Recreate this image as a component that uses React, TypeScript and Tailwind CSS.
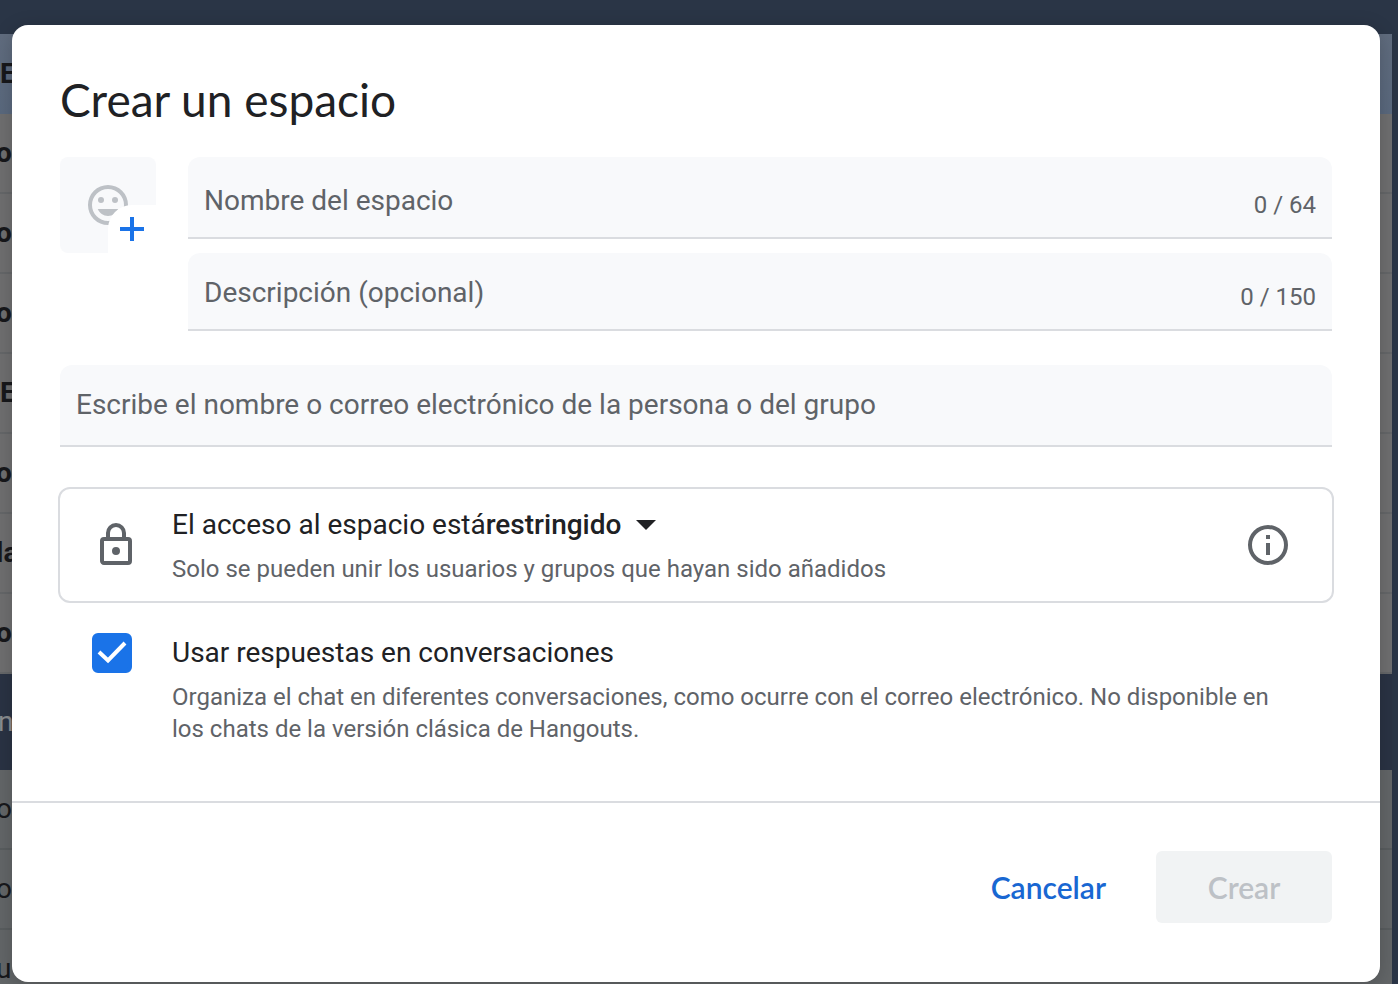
import type { ReactNode } from 'react'

const rows = ['o', 'o', 'o', 'E', 'o', 'la', 'o']
const lowerRows = ['o', 'o', 'u']

function Backdrop() {
  return (
    <div className="h-screen overflow-hidden bg-[#2a3546] pt-[34px] pr-1.5 text-[28px] text-[#17181b]" aria-hidden="true">
      <div className="flex h-20 items-center bg-linear-to-b from-[#606c7e] to-[#5a697e] font-bold">E</div>
      {rows.map((text, i) => (
        <div
          key={i}
          className={`flex h-20 items-center border-b-2 border-[#656769] bg-[#6f6f70] font-bold ${text === 'E' ? '' : '-indent-1'}`}
        >
          {text}
        </div>
      ))}
      <div className="flex h-24 items-center bg-[#2a3344] text-[#8b8d90] -indent-0.5">n</div>
      {lowerRows.map((text, i) => (
        <div key={i} className="flex h-20 items-center border-b-2 border-[#595d5f] bg-[#636668] -indent-1">
          {text}
        </div>
      ))}
    </div>
  )
}

function Icon({ children }: { children: ReactNode }) {
  return (
    <svg viewBox="0 0 24 24" className="size-12 shrink-0" fill="currentColor" aria-hidden="true">
      {children}
    </svg>
  )
}

type FieldProps = {
  label: string
  counter?: string
  className: string
}

function Field({ label, counter, className }: FieldProps) {
  return (
    <label className={`flex items-center rounded-t-xl border-b-2 border-[#dadce0] bg-[#f8f9fb] px-4 text-[#5f6368] ${className}`}>
      <input
        type="text"
        placeholder={label}
        aria-label={label}
        className="h-10 min-w-0 flex-1 bg-transparent text-[28px] outline-none placeholder:text-[#5f6368]"
      />
      {counter && <span className="pt-2 text-2xl">{counter}</span>}
    </label>
  )
}

export default function App() {
  return (
    <div className="font-[Roboto,sans-serif]">
      <Backdrop />
      <div
        role="dialog"
        aria-labelledby="dialog-title"
        className="absolute top-[25px] right-[18px] left-3 rounded-2xl bg-white shadow-[0_4px_20px_rgba(0,0,0,0.2)]"
      >
        <div className="px-12 pt-12 pb-14">
          <h1 id="dialog-title" className="font-[Lato,sans-serif] text-[46px] leading-[54px] text-[#202124]">
            Crear un espacio
          </h1>

          <div className="mt-[30px] flex gap-8">
            <button type="button" aria-label="Elegir un emoji" className="relative flex size-24 shrink-0 items-center justify-center rounded-lg bg-[#f8f9fb] text-[#bdc1c6]">
              <Icon>
                <path d="M12 2a10 10 0 1 0 0 20 10 10 0 0 0 0-20zm0 18a8 8 0 1 1 0-16 8 8 0 0 1 0 16z" />
                <circle cx="8.5" cy="9.5" r="1.5" />
                <circle cx="15.5" cy="9.5" r="1.5" />
                <path d="M12 17.5c2.33 0 4.31-1.46 5.11-3.5H6.89c.8 2.04 2.78 3.5 5.11 3.5z" />
              </Icon>
              <span className="absolute right-0 bottom-0 flex size-12 items-center justify-center rounded-tl-3xl bg-white text-[#1a73e8]">
                <svg viewBox="0 0 24 24" className="size-6" stroke="currentColor" strokeWidth="4" aria-hidden="true">
                  <path d="M12 0v24M0 12h24" />
                </svg>
              </span>
            </button>
            <div className="flex flex-1 flex-col gap-3.5">
              <Field label="Nombre del espacio" counter="0 / 64" className="h-[82px] pt-2" />
              <Field label="Descripción (opcional)" counter="0 / 150" className="h-[78px] pt-1" />
            </div>
          </div>

          <Field
            label="Escribe el nombre o correo electrónico de la persona o del grupo"
            className="mt-[34px] h-[82px]"
          />

          <div className="-mx-0.5 mt-10 flex items-center gap-8 rounded-xl border-2 border-[#dadce0] py-4 pr-10 pl-8 text-[#5f6368]">
            <Icon>
              <path d="M18 8h-1V6A5 5 0 0 0 7 6v2H6a2 2 0 0 0-2 2v10c0 1.1.9 2 2 2h12a2 2 0 0 0 2-2V10a2 2 0 0 0-2-2zM9 6a3 3 0 0 1 6 0v2H9V6zm9 14H6V10h12v10zm-6-3a2 2 0 1 0 0-4 2 2 0 0 0 0 4z" />
            </Icon>
            <div className="flex-1">
              <div className="flex h-10 items-center text-[28px] text-[#202124]">
                <label htmlFor="access">El acceso al espacio está</label>
                <select id="access" className="appearance-none bg-transparent font-medium outline-none">
                  <option>restringido</option>
                </select>
                <svg viewBox="0 0 20 10" className="ml-3.5 h-2.5 w-5" fill="currentColor" aria-hidden="true">
                  <path d="M0 0h20L10 10z" />
                </svg>
              </div>
              <p className="mt-2 text-2xl">Solo se pueden unir los usuarios y grupos que hayan sido añadidos</p>
            </div>
            <button type="button" aria-label="Más información">
              <Icon>
                <path d="M11 7h2v2h-2zm0 4h2v6h-2zM12 2a10 10 0 1 0 0 20 10 10 0 0 0 0-20zm0 18a8 8 0 1 1 0-16 8 8 0 0 1 0 16z" />
              </Icon>
            </button>
          </div>

          <div className="mt-[30px] flex gap-10 pr-12 pl-8">
            <div className="grid size-10 shrink-0">
              <input
                id="threads"
                type="checkbox"
                defaultChecked
                className="peer col-start-1 row-start-1 size-10 appearance-none rounded-md border-4 border-[#5f6368] checked:border-[#1a73e8] checked:bg-[#1a73e8]"
              />
              <svg
                viewBox="0 0 40 40"
                className="pointer-events-none col-start-1 row-start-1 hidden size-10 peer-checked:block"
                fill="none"
                stroke="white"
                strokeWidth="4"
                aria-hidden="true"
              >
                <path d="M7 19l9 8.500L33 10" />
              </svg>
            </div>
            <div>
              <label htmlFor="threads" className="block text-[28px] leading-10 text-[#202124]">
                Usar respuestas en conversaciones
              </label>
              <p className="mt-2 text-2xl text-[#5f6368]">
                Organiza el chat en diferentes conversaciones, como ocurre con el correo electrónico. No disponible en
                los chats de la versión clásica de Hangouts.
              </p>
            </div>
          </div>
        </div>

        <div className="flex justify-end gap-4 border-t-2 border-[#dadce0] px-12 pt-12 pb-[59px] font-[Lato,sans-serif] text-[30px] font-semibold">
          <button type="button" className="h-[72px] px-[34px] text-[#1967d2]">
            Cancelar
          </button>
          <button type="button" disabled className="h-[72px] w-44 rounded-md bg-[#f1f3f4] text-[#bdc1c6]">
            Crear
          </button>
        </div>
      </div>
    </div>
  )
}
